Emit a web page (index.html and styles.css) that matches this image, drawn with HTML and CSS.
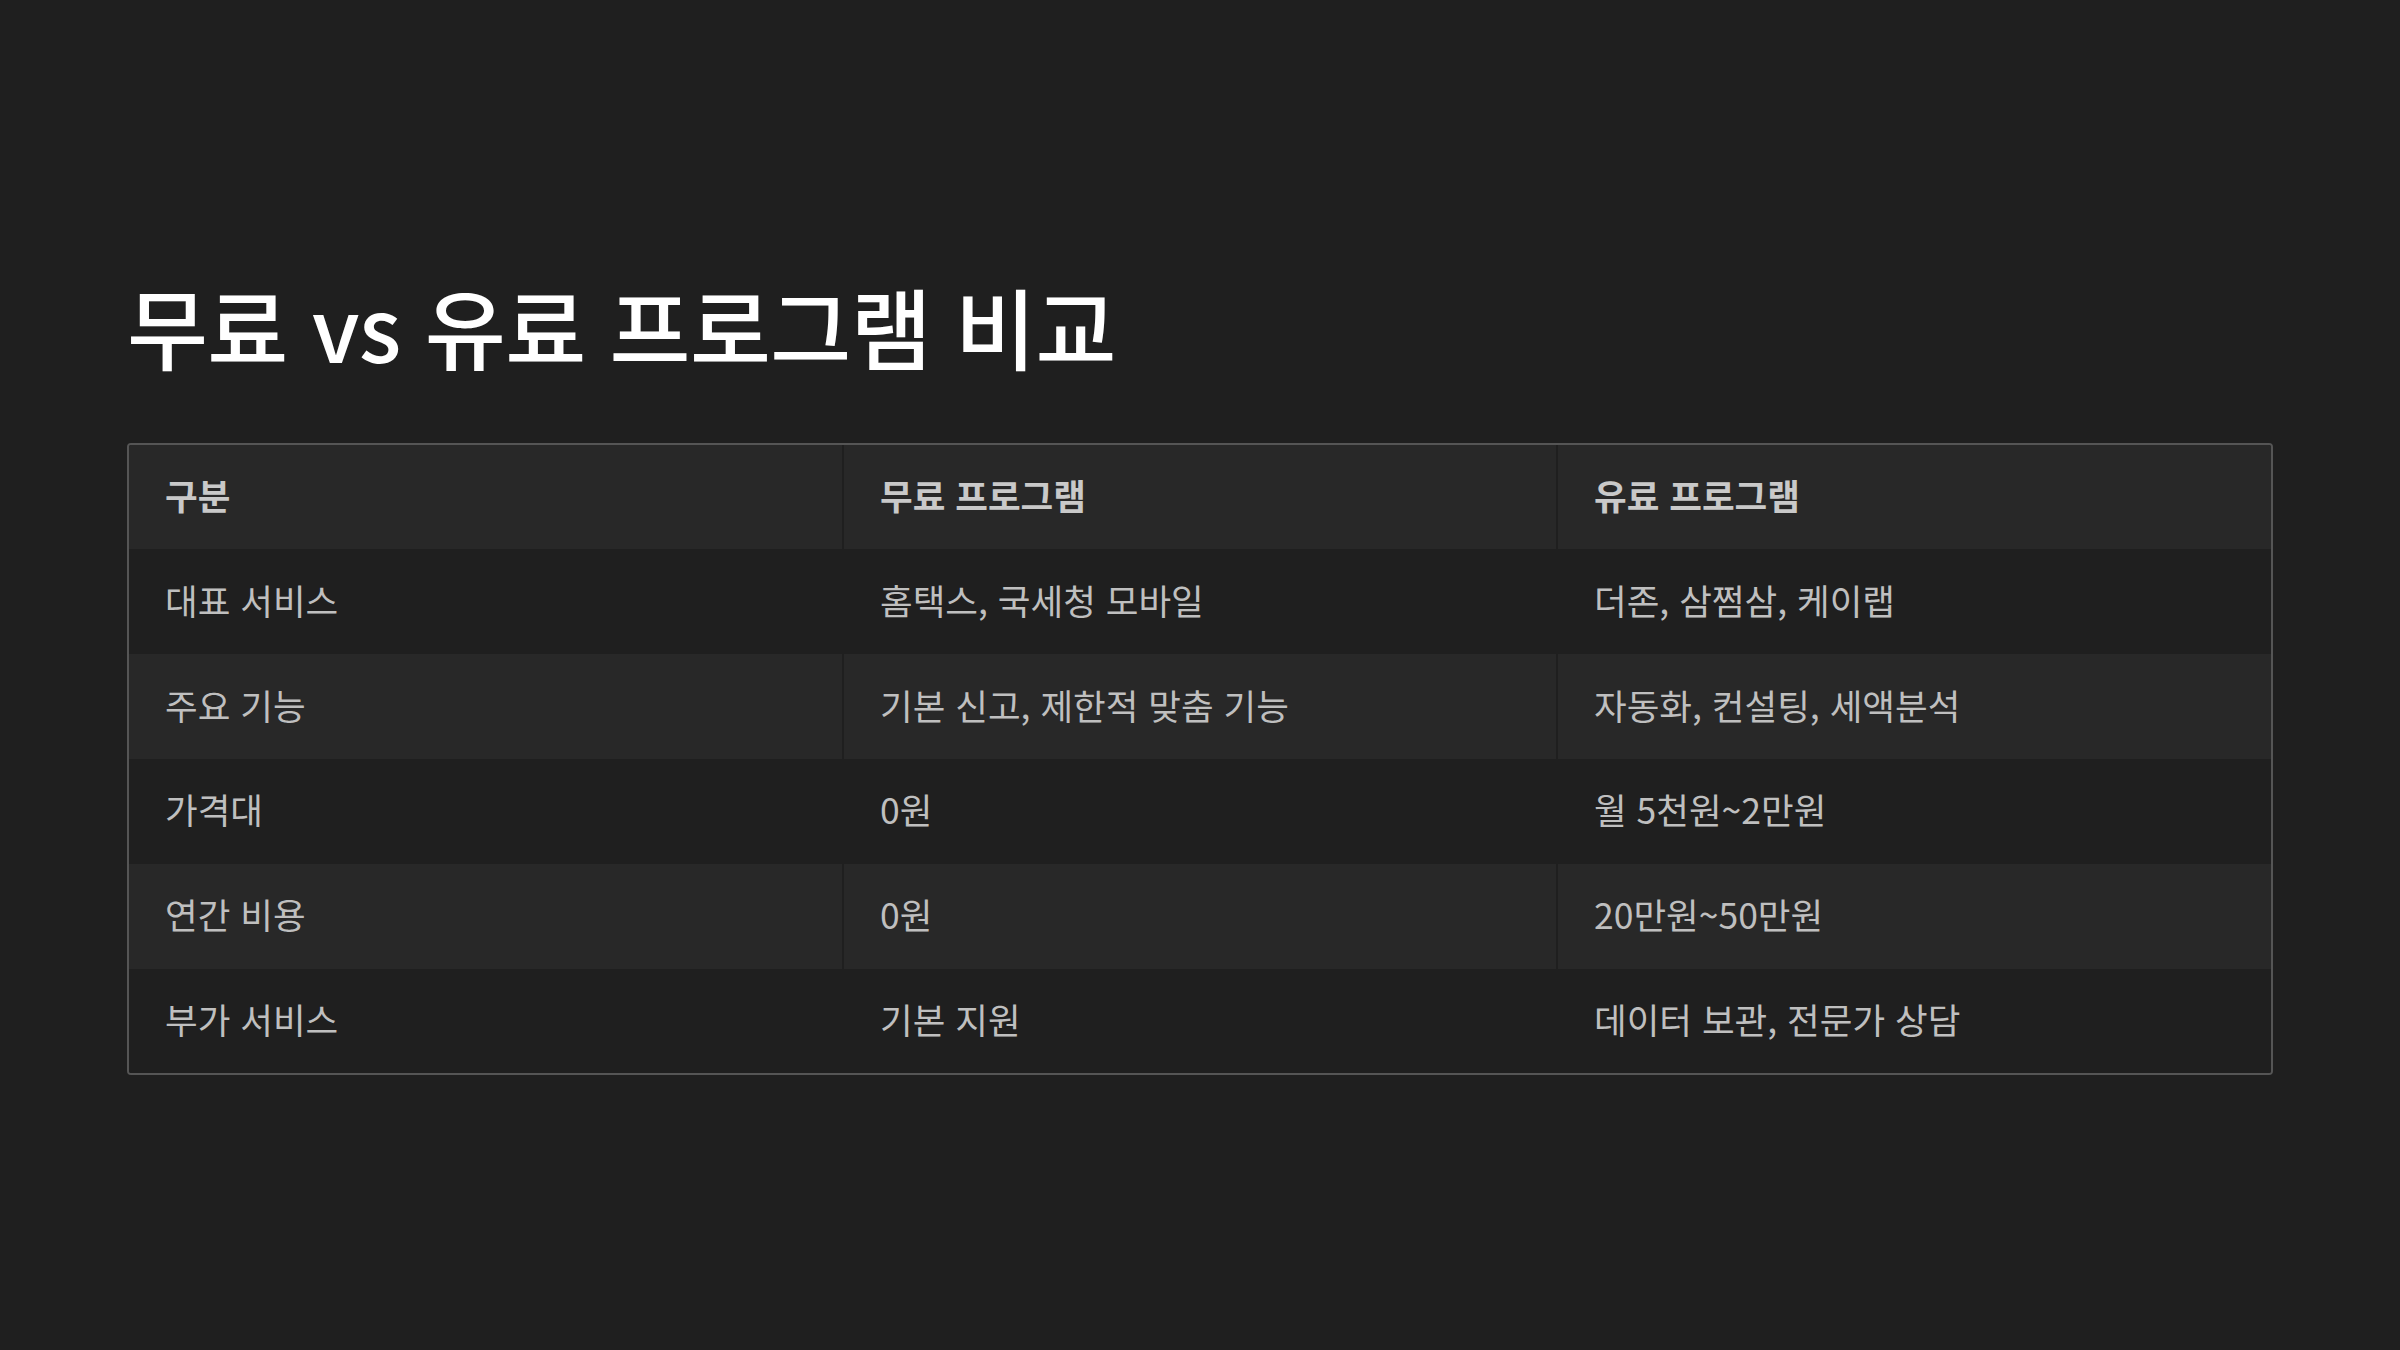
FILE: index.html
```html
<!DOCTYPE html>
<html lang="ko">
<head>
<meta charset="utf-8">
<title>무료 vs 유료 프로그램 비교</title>
<link rel="stylesheet" href="styles.css">
</head>
<body>
<main class="slide">
  <h1 class="title">무료 vs 유료 프로그램 비교</h1>
  <div class="table-wrap">
    <table class="compare">
      <thead>
        <tr><th>구분</th><th>무료 프로그램</th><th>유료 프로그램</th></tr>
      </thead>
      <tbody>
        <tr><td>대표 서비스</td><td>홈택스, 국세청 모바일</td><td>더존, 삼쩜삼, 케이랩</td></tr>
        <tr><td>주요 기능</td><td>기본 신고, 제한적 맞춤 기능</td><td>자동화, 컨설팅, 세액분석</td></tr>
        <tr><td>가격대</td><td>0원</td><td>월 5천원~2만원</td></tr>
        <tr><td>연간 비용</td><td>0원</td><td>20만원~50만원</td></tr>
        <tr><td>부가 서비스</td><td>기본 지원</td><td>데이터 보관, 전문가 상담</td></tr>
      </tbody>
    </table>
  </div>
</main>
</body>
</html>
```
FILE: styles.css
```css
html, body {
  margin: 0;
  padding: 0;
  background: #1f1f1f;
}
body {
  width: 2400px;
  height: 1350px;
  overflow: hidden;
  font-family: "Noto Sans CJK KR", "Noto Sans", sans-serif;
}
.slide {
  padding: 272px 127px 0 127px;
  display: flex;
  flex-direction: column;
}
.title {
  margin: 0;
  color: #ffffff;
  font-size: 88px;
  font-weight: 500;
  line-height: 1.2;
  letter-spacing: -0.6px;
}
.table-wrap {
  margin-top: 65px;
  border: 2px solid #555555;
  border-radius: 4px;
  overflow: hidden;
}
.compare {
  width: 100%;
  border-collapse: collapse;
  table-layout: fixed;
  font-size: 35.5px;
}
.compare th,
.compare td {
  height: 104.8px;
  box-sizing: border-box;
  padding: 0 0 5px 36px;
  text-align: left;
  vertical-align: middle;
  border-left: 2px solid #1f1f1f;
}
.compare th:first-child,
.compare td:first-child {
  border-left: none;
}
.compare th {
  background: #282828;
  color: #c9c9c9;
  font-weight: 700;
}
.compare td {
  color: #bfbfbf;
  font-weight: 400;
}
.compare tbody tr:nth-child(odd) td {
  background: #1f1f1f;
}
.compare tbody tr:nth-child(even) td {
  background: #282828;
}
```
